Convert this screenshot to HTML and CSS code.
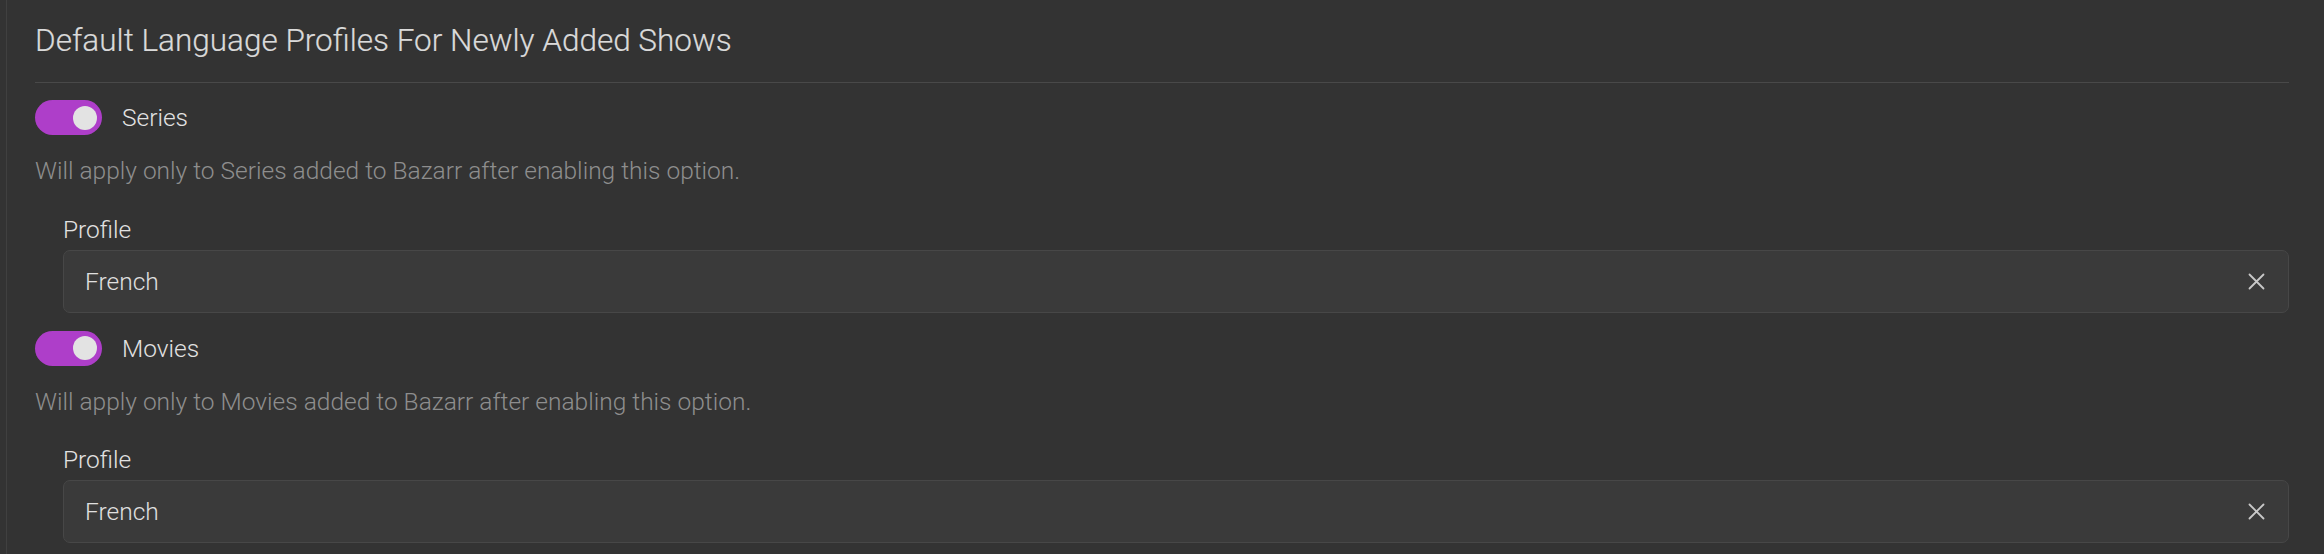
FILE: index.html
```html
<!DOCTYPE html>
<html lang="en">
<head>
<meta charset="utf-8">
<title>Default Language Profiles</title>
<link rel="stylesheet" href="styles.css">
</head>
<body>
<main class="page">
  <section class="section">
    <h4 class="title">Default Language Profiles For Newly Added Shows</h4>
    <div class="divider"></div>

    <div class="option">
      <label class="switch">
        <span class="track"><span class="thumb"></span></span>
        <span class="switch-label">Series</span>
      </label>
      <p class="desc">Will apply only to Series added to Bazarr after enabling this option.</p>
      <div class="field">
        <div class="field-label">Profile</div>
        <div class="select">
          <span class="select-value">French</span>
          <span class="clear">
            <svg width="17" height="17" viewBox="0 0 17 17" fill="none" stroke="currentColor" stroke-width="1.8" stroke-linecap="round"><path d="M1.5 1.5 L15.5 15.5 M15.5 1.5 L1.5 15.5"/></svg>
          </span>
        </div>
      </div>
    </div>

    <div class="option">
      <label class="switch">
        <span class="track"><span class="thumb"></span></span>
        <span class="switch-label">Movies</span>
      </label>
      <p class="desc">Will apply only to Movies added to Bazarr after enabling this option.</p>
      <div class="field">
        <div class="field-label">Profile</div>
        <div class="select">
          <span class="select-value">French</span>
          <span class="clear">
            <svg width="17" height="17" viewBox="0 0 17 17" fill="none" stroke="currentColor" stroke-width="1.8" stroke-linecap="round"><path d="M1.5 1.5 L15.5 15.5 M15.5 1.5 L1.5 15.5"/></svg>
          </span>
        </div>
      </div>
    </div>
  </section>
</main>
</body>
</html>
```

FILE: styles.css
```css
html, body {
  margin: 0;
  padding: 0;
  background: #333333;
  height: 100%;
}

body {
  font-family: Roboto, "Liberation Sans", sans-serif;
  font-weight: 300;
  overflow: hidden;
}

.page {
  margin-left: 6px;
  border-left: 1px solid #404040;
  min-height: 100%;
  padding: 0 35px 0 28px;
  box-sizing: border-box;
}

.section {
  padding-top: 16px;
}

.title {
  margin: 0;
  font-size: 31.5px;
  line-height: 50px;
  font-weight: 300;
  color: #dadada;
  -webkit-text-stroke: 0.2px #dadada;
}

.divider {
  margin-top: 16px;
  height: 1px;
  background: #494949;
}

.option {
  display: flex;
  flex-direction: column;
  margin-top: 17px;
}

.option + .option {
  margin-top: 18px;
}

.switch {
  display: flex;
  align-items: center;
  height: 35px;
}

.track {
  width: 67px;
  height: 35px;
  border-radius: 18px;
  background: #ae3ec9;
  display: flex;
  align-items: center;
  justify-content: flex-end;
  padding-right: 5px;
  box-sizing: border-box;
}

.thumb {
  width: 24px;
  height: 24px;
  border-radius: 50%;
  background: #e3e3e3;
}

.switch-label {
  margin-left: 20px;
  font-size: 24.5px;
  line-height: 35px;
  color: #e2e2e2;
}

.desc {
  margin: 17px 0 0;
  font-size: 24.5px;
  line-height: 38px;
  color: #8e8e8e;
}

.field {
  margin-top: 20.5px;
  margin-left: 28px;
}

.field-label {
  font-size: 24.5px;
  line-height: 38px;
  color: #e2e2e2;
}

.select {
  margin-top: 1px;
  height: 63px;
  box-sizing: border-box;
  border: 1px solid #474747;
  border-radius: 7px;
  background: #3a3a3a;
  display: flex;
  align-items: center;
}

.select-value {
  flex: 1;
  padding-left: 21px;
  font-size: 24.5px;
  line-height: 61px;
  color: #e0e0e0;
}

.clear {
  width: 63px;
  height: 61px;
  display: flex;
  align-items: center;
  justify-content: center;
  color: #c8c8c8;
}
```
